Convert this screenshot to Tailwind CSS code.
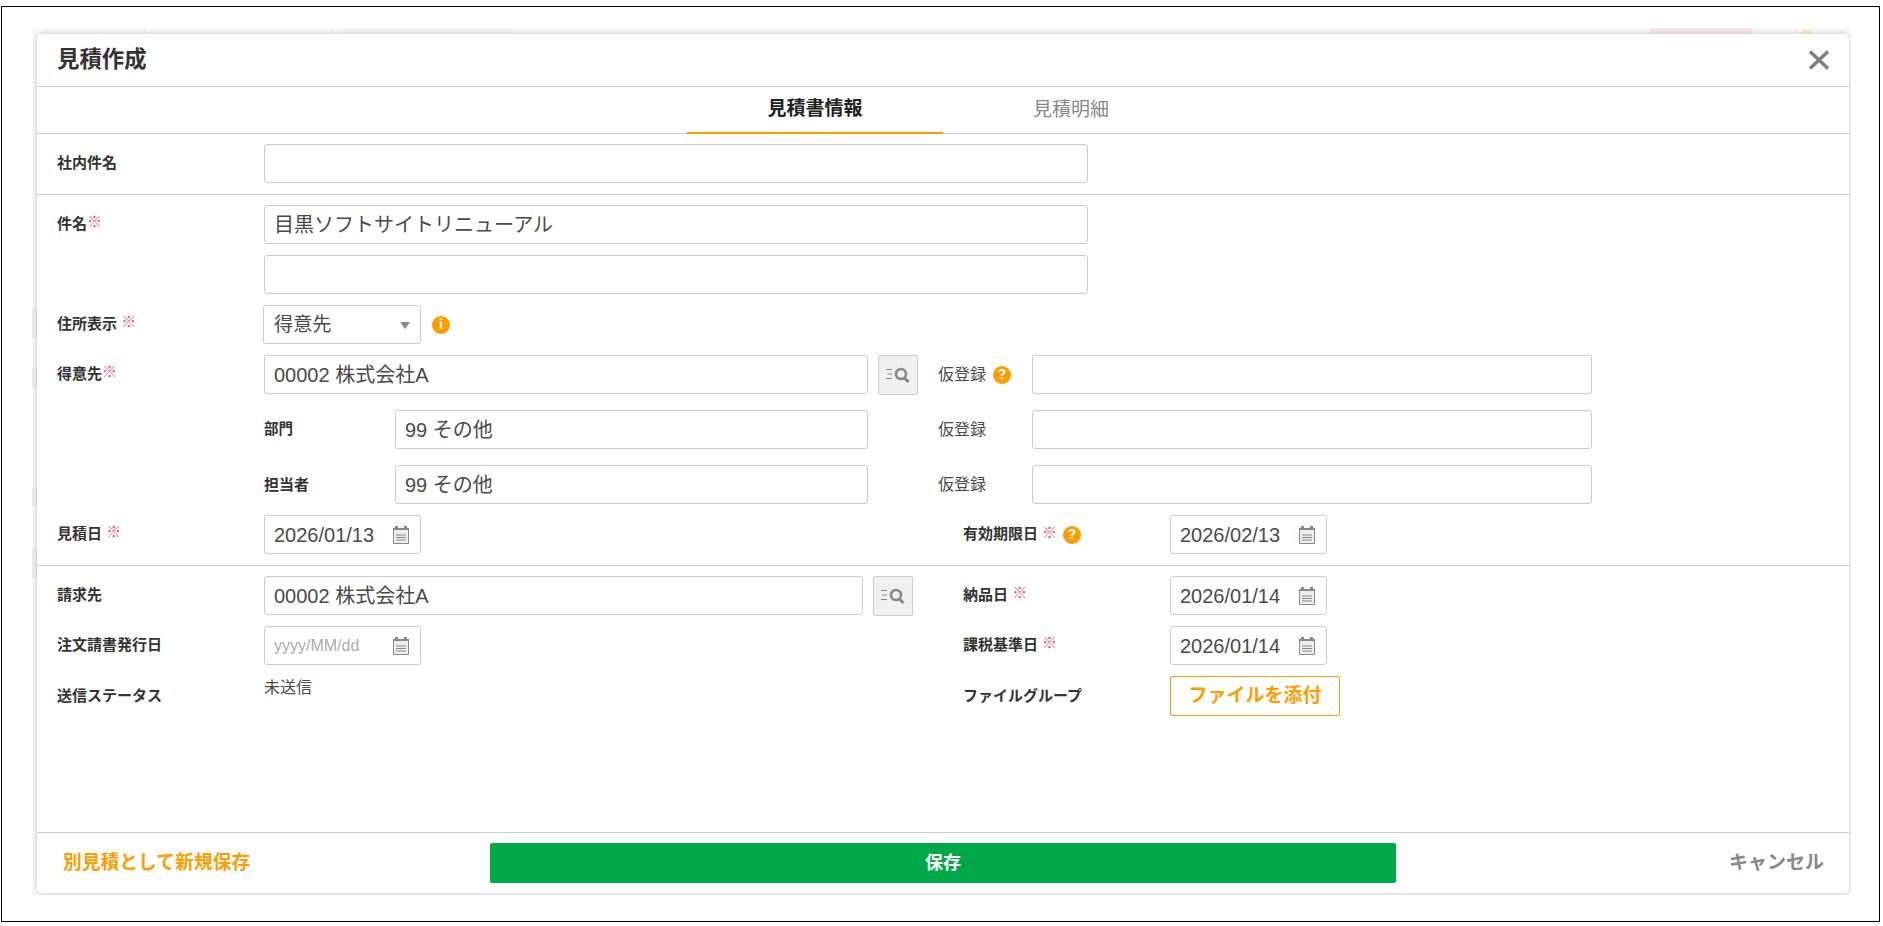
<!DOCTYPE html>
<html lang="ja">
<head>
<meta charset="UTF-8">
<title>見積作成</title>
<script src="https://cdn.jsdelivr.net/npm/@tailwindcss/browser@4"></script>
</head>
<body class="bg-white text-[#4a4a4a] font-['Liberation_Sans','Noto_Sans_CJK_JP',sans-serif]">
<div class="h-[926px] w-[1883px] pl-[1px] pr-[3px] pt-[6px]">
  <div class="flex h-[916px] flex-col border border-black pl-[30px] pr-[28px] pt-[21px]">
    <div class="relative h-[867px] overflow-hidden bg-[#fafafa] pb-[2px] pl-[5px] pr-[2px] pt-[6px]">
      <!-- faded page behind the dialog -->
      <span class="absolute left-[1617px] top-0 h-[6px] w-[104px] bg-[#fae9ec]"></span>
      <span class="absolute left-[1768px] top-[1px] h-[14px] w-[14px] rounded-full bg-[#fbeed8]"></span>
      <span class="absolute left-[1763px] top-0 h-[6px] w-[1px] bg-[#f9eedb]"></span>
      <span class="absolute left-[70px] top-0 h-[6px] w-[1px] bg-[#f0f0f0]"></span>
      <span class="absolute left-[112px] top-0 h-[6px] w-[1px] bg-[#f0f0f0]"></span>
      <span class="absolute left-[300px] top-0 h-[6px] w-[1px] bg-[#f0f0f0]"></span>
      <span class="absolute left-[310px] top-0 h-[6px] w-[170px] bg-[#f7f7f7]"></span>
      <span class="absolute left-0 top-[280px] h-[30px] w-[5px] bg-[#f0f0f0]"></span>
      <span class="absolute left-0 top-[340px] h-[20px] w-[5px] bg-[#f0f0f0]"></span>
      <span class="absolute left-0 top-[460px] h-[18px] w-[5px] bg-[#f0f0f0]"></span>
      <span class="absolute left-0 top-[520px] h-[30px] w-[5px] bg-[#f0f0f0]"></span>
      <div class="relative flex h-[859px] flex-col rounded-[5px] bg-white shadow-[0_0_6px_rgba(0,0,0,0.22)]">

        <header class="flex h-[53px] items-center justify-between border-b border-[#ccc] pl-[20px] pr-[19px]">
          <h1 class="text-[22.4px] font-bold text-[#333]">見積作成</h1>
          <svg class="h-[20px] w-[22px]" viewBox="0 0 22 20"><path d="M2 1.500 20 18.500M20 1.500 2 18.500" stroke="#808080" stroke-width="3.600" fill="none"/></svg>
        </header>

        <nav class="flex h-[47px] justify-center border-b border-[#ccc]">
          <div class="flex h-[47px] w-[256px] items-center justify-center border-b-2 border-[#ff9d00] text-[19px] font-bold text-[#222]">見積書情報</div>
          <div class="flex h-[46px] w-[256px] items-center justify-center text-[19px] text-[#888]">見積明細</div>
        </nav>

        <section class="flex h-[61px] items-center border-b border-[#ccc] pb-[1px] pl-[20px]">
          <label class="w-[207px] text-[15px] font-bold text-[#333]">社内件名</label>
          <div class="h-[39px] w-[824px] rounded-[3px] border border-[#ccc]"></div>
        </section>

        <section class="h-[371px] border-b border-[#ccc] pl-[20px] pt-[10px]">
          <div class="flex h-[39px] items-center">
            <label class="w-[207px] text-[15px] font-bold text-[#333]">件名<span class="relative -top-[2px] text-[15px] font-normal leading-none text-[#f0517a]">※</span></label>
            <div class="flex h-[39px] w-[824px] items-center rounded-[3px] border border-[#ccc] pl-[9px] pt-[1px] text-[20px]">目黒ソフトサイトリニューアル</div>
          </div>
          <div class="mt-[11px] flex h-[39px] items-center">
            <div class="w-[207px]"></div>
            <div class="h-[39px] w-[824px] rounded-[3px] border border-[#ccc]"></div>
          </div>
          <div class="mt-[11px] flex h-[39px] items-center">
            <label class="w-[206px] text-[15px] font-bold text-[#333]">住所表示 <span class="relative -top-[2px] text-[15px] font-normal leading-none text-[#f0517a]">※</span></label>
            <div class="flex h-[39px] w-[158px] items-center justify-between rounded-[3px] border border-[#ccc] pl-[10px] pr-[10px] pt-[2px] text-[19.2px]">得意先<svg class="h-[7px] w-[10px]" viewBox="0 0 10 7"><path d="M0 0h10L5 7z" fill="#888"/></svg></div>
            <span class="ml-[11px] flex h-[18px] w-[18px] items-center justify-center rounded-full bg-[#ff9d00] text-[14px] font-bold text-white">i</span>
          </div>
          <div class="mt-[11px] flex h-[39px] items-center">
            <label class="w-[207px] text-[15px] font-bold text-[#333]">得意先<span class="relative -top-[2px] text-[15px] font-normal leading-none text-[#f0517a]">※</span></label>
            <div class="flex h-[39px] w-[604px] items-center rounded-[3px] border border-[#ccc] pl-[9px] text-[20px]">00002 株式会社A</div>
            <button class="ml-[10px] flex h-[40px] w-[40px] items-center justify-center rounded-[2px] border border-[#ccc] bg-[#f0f0f0]">
              <svg class="h-[16px] w-[24px]" viewBox="0 0 24 16"><path d="M0 2.500h6M1.500 7h4.500M0 11.500h6" stroke="#888" stroke-width="1.200"/><circle cx="15" cy="7" r="5" fill="none" stroke="#888" stroke-width="2.600"/><path d="M18.500 11 22.500 15" stroke="#888" stroke-width="3"/></svg>
            </button>
            <span class="ml-[20px] w-[48px] whitespace-nowrap text-[16px]">仮登録</span>
            <span class="ml-[7px] flex h-[18px] w-[18px] items-center justify-center rounded-full bg-[#ff9d00] text-[14px] font-bold text-white">?</span>
            <div class="ml-[21px] h-[39px] w-[560px] rounded-[3px] border border-[#ccc]"></div>
          </div>
          <div class="mt-[16px] flex h-[39px] items-center">
            <div class="w-[207px]"></div>
            <label class="w-[131px] pt-[1px] text-[14.500px] font-bold text-[#333]">部門</label>
            <div class="flex h-[39px] w-[473px] items-center rounded-[3px] border border-[#ccc] pl-[9px] text-[20px]">99 その他</div>
            <span class="ml-[70px] w-[94px] text-[16px]">仮登録</span>
            <div class="h-[39px] w-[560px] rounded-[3px] border border-[#ccc]"></div>
          </div>
          <div class="mt-[16px] flex h-[39px] items-center">
            <div class="w-[207px]"></div>
            <label class="w-[131px] pt-[1px] text-[15px] font-bold text-[#333]">担当者</label>
            <div class="flex h-[39px] w-[473px] items-center rounded-[3px] border border-[#ccc] pl-[9px] text-[20px]">99 その他</div>
            <span class="ml-[70px] w-[94px] text-[16px]">仮登録</span>
            <div class="h-[39px] w-[560px] rounded-[3px] border border-[#ccc]"></div>
          </div>
          <div class="mt-[11px] flex h-[39px] items-center">
            <label class="w-[207px] text-[15px] font-bold text-[#333]">見積日 <span class="relative -top-[2px] text-[15px] font-normal leading-none text-[#f0517a]">※</span></label>
            <div class="flex h-[39px] w-[157px] items-center justify-between rounded-[3px] border border-[#ccc] pl-[9px] pr-[10px] text-[20px]">2026/01/13
              <svg class="h-[18px] w-[18px]" viewBox="0 0 18 18"><path d="M3 0h3v3H3zM12 0h3v3h-3z" fill="#888"/><path d="M1 2h16v5H1z" fill="#888"/><path d="M1.500 4v13.500h15V4" fill="#eee" stroke="#888"/><path d="M4 9h10M4 11.500h10M4 14h10" stroke="#888"/></svg>
            </div>
            <label class="ml-[542px] flex w-[207px] items-center text-[15px] font-bold text-[#333]">有効期限日<span class="relative -top-[2px] ml-[4px] text-[15px] font-normal leading-none text-[#f0517a]">※</span><span class="ml-[6px] flex h-[18px] w-[18px] items-center justify-center rounded-full bg-[#ff9d00] text-[14px] font-bold text-white">?</span></label>
            <div class="flex h-[39px] w-[157px] items-center justify-between rounded-[3px] border border-[#ccc] pl-[9px] pr-[10px] text-[20px]">2026/02/13
              <svg class="h-[18px] w-[18px]" viewBox="0 0 18 18"><path d="M3 0h3v3H3zM12 0h3v3h-3z" fill="#888"/><path d="M1 2h16v5H1z" fill="#888"/><path d="M1.500 4v13.500h15V4" fill="#eee" stroke="#888"/><path d="M4 9h10M4 11.500h10M4 14h10" stroke="#888"/></svg>
            </div>
          </div>
        </section>

        <section class="h-[267px] border-b border-[#ccc] pl-[20px] pt-[10px]">
          <div class="flex h-[39px] items-center">
            <label class="w-[207px] text-[15px] font-bold text-[#333]">請求先</label>
            <div class="flex h-[39px] w-[599px] items-center rounded-[3px] border border-[#ccc] pl-[9px] text-[20px]">00002 株式会社A</div>
            <button class="ml-[10px] flex h-[40px] w-[40px] items-center justify-center rounded-[2px] border border-[#ccc] bg-[#f0f0f0]">
              <svg class="h-[16px] w-[24px]" viewBox="0 0 24 16"><path d="M0 2.500h6M1.500 7h4.500M0 11.500h6" stroke="#888" stroke-width="1.200"/><circle cx="15" cy="7" r="5" fill="none" stroke="#888" stroke-width="2.600"/><path d="M18.500 11 22.500 15" stroke="#888" stroke-width="3"/></svg>
            </button>
            <label class="ml-[50px] w-[207px] text-[15px] font-bold text-[#333]">納品日 <span class="relative -top-[2px] text-[15px] font-normal leading-none text-[#f0517a]">※</span></label>
            <div class="flex h-[39px] w-[157px] items-center justify-between rounded-[3px] border border-[#ccc] pl-[9px] pr-[10px] text-[20px]">2026/01/14
              <svg class="h-[18px] w-[18px]" viewBox="0 0 18 18"><path d="M3 0h3v3H3zM12 0h3v3h-3z" fill="#888"/><path d="M1 2h16v5H1z" fill="#888"/><path d="M1.500 4v13.500h15V4" fill="#eee" stroke="#888"/><path d="M4 9h10M4 11.500h10M4 14h10" stroke="#888"/></svg>
            </div>
          </div>
          <div class="mt-[11px] flex h-[39px] items-center">
            <label class="w-[207px] text-[15px] font-bold text-[#333]">注文請書発行日</label>
            <div class="flex h-[39px] w-[157px] items-center justify-between rounded-[3px] border border-[#ccc] pl-[9px] pr-[10px] text-[16px] text-[#aaa]">yyyy/MM/dd
              <svg class="h-[18px] w-[18px]" viewBox="0 0 18 18"><path d="M3 0h3v3H3zM12 0h3v3h-3z" fill="#888"/><path d="M1 2h16v5H1z" fill="#888"/><path d="M1.500 4v13.500h15V4" fill="#eee" stroke="#888"/><path d="M4 9h10M4 11.500h10M4 14h10" stroke="#888"/></svg>
            </div>
            <label class="ml-[542px] w-[207px] text-[15px] font-bold text-[#333]">課税基準日<span class="relative -top-[2px] ml-[4px] text-[15px] font-normal leading-none text-[#f0517a]">※</span></label>
            <div class="flex h-[39px] w-[157px] items-center justify-between rounded-[3px] border border-[#ccc] pl-[9px] pr-[10px] text-[20px]">2026/01/14
              <svg class="h-[18px] w-[18px]" viewBox="0 0 18 18"><path d="M3 0h3v3H3zM12 0h3v3h-3z" fill="#888"/><path d="M1 2h16v5H1z" fill="#888"/><path d="M1.500 4v13.500h15V4" fill="#eee" stroke="#888"/><path d="M4 9h10M4 11.500h10M4 14h10" stroke="#888"/></svg>
            </div>
          </div>
          <div class="mt-[11px] flex h-[40px] items-center">
            <label class="w-[207px] text-[15px] font-bold text-[#333]">送信ステータス</label>
            <span class="w-[157px] self-start text-[16px]">未送信</span>
            <label class="ml-[542px] w-[207px] text-[15px] font-bold text-[#333]">ファイルグループ</label>
            <button class="h-[40px] w-[170px] rounded-[2px] border border-[#ff9d00] text-[19px] font-bold text-[#ff9d00]">ファイルを添付</button>
          </div>
        </section>

        <footer class="flex h-[60px] items-center pb-[1px]">
          <a class="w-[453px] pl-[26px] pt-[1px] text-[18.800px] font-bold text-[#ff9d00]">別見積として新規保存</a>
          <button class="h-[40px] w-[906px] rounded-[2px] bg-[#00a948] pt-[1px] text-[18px] font-bold text-white">保存</button>
          <a class="ml-auto pr-[25px] pt-[1px] text-[19px] font-bold text-[#888]">キャンセル</a>
        </footer>
      </div>
    </div>
  </div>
</div>
</body>
</html>
